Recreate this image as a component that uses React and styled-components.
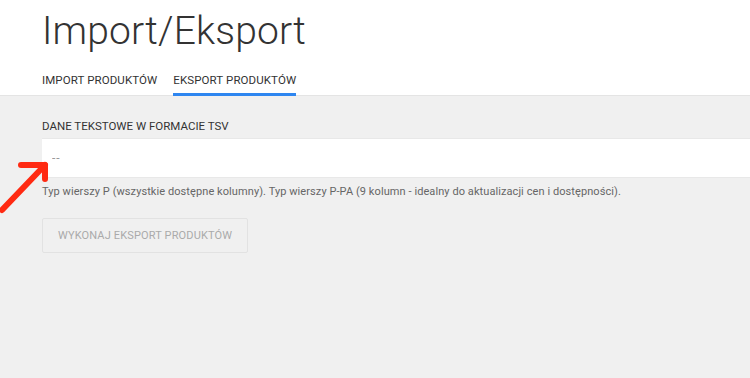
import React, { useState } from "react";
import styled, { createGlobalStyle } from "styled-components";

const GlobalStyle = createGlobalStyle`
  html, body {
    margin: 0;
    padding: 0;
    background: #f0f0f0;
    font-family: Roboto, "Liberation Sans", sans-serif;
  }
  * { box-sizing: border-box; }
`;

const Page = styled.div`
  position: relative;
  width: 750px;
  height: 378px;
  overflow: hidden;
  background: #f0f0f0;
`;

const Header = styled.div`
  background: #fff;
  padding: 0 0 0 42px;
  border-bottom: 1px solid #e4e4e4;
`;

const Title = styled.h1`
  margin: 0;
  padding-top: 5px;
  font-size: 39px;
  line-height: 52px;
  font-weight: 300;
  color: #333;
  letter-spacing: 0.15px;
`;

const Tabs = styled.div`
  display: flex;
  gap: 16px;
  margin-top: 16px;
`;

const Tab = styled.div`
  font-size: 11.5px;
  color: #333;
  padding-bottom: 6px;
  border-bottom: 3px solid ${(p) => (p.active ? "#2e86f0" : "transparent")};
  margin-bottom: -1px;
  cursor: pointer;
  letter-spacing: 0.1px;
`;

const Content = styled.div`
  padding: 23px 0 0 42px;
  display: flex;
  flex-direction: column;
  align-items: flex-start;
`;

const Label = styled.label`
  font-size: 11.5px;
  color: #333;
  letter-spacing: 0px;
  margin-bottom: 5px;
`;

const TextArea = styled.input`
  width: 100%;
  height: 40px;
  border: none;
  border-top: 1px solid #e8e8e8;
  border-bottom: 1px solid #e8e8e8;
  background: #fff;
  padding: 0 10px;
  font-family: inherit;
  font-size: 12px;
  color: #333;
  outline: none;
  &::placeholder { color: #999; letter-spacing: 1px; }
`;

const Help = styled.p`
  margin: 7px 0 0;
  font-size: 11px;
  color: #666;
  letter-spacing: 0.08px;
`;

const Button = styled.button`
  margin-top: 20px;
  height: 35px;
  padding: 0 15px;
  background: #f0f0f0;
  border: 1px solid #e2e2e2;
  border-radius: 2px;
  font-family: inherit;
  font-size: 11px;
  color: #aaa;
  letter-spacing: 0.15px;
  cursor: default;
`;

const Arrow = styled.svg`
  position: absolute;
  left: 0;
  top: 155px;
`;

export default function App() {
  const [tab, setTab] = useState("export");
  return (
    <Page>
      <GlobalStyle />
      <Header>
        <Title>Import/Eksport</Title>
        <Tabs>
          <Tab active={tab === "import"} onClick={() => setTab("import")}>IMPORT PRODUKTÓW</Tab>
          <Tab active={tab === "export"} onClick={() => setTab("export")}>EKSPORT PRODUKTÓW</Tab>
        </Tabs>
      </Header>
      <Content>
        <Label>DANE TEKSTOWE W FORMACIE TSV</Label>
        <TextArea placeholder="--" />
        <Help>Typ wierszy P (wszystkie dostępne kolumny). Typ wierszy P-PA (9 kolumn - idealny do aktualizacji cen i dostępności).</Help>
        <Button disabled>WYKONAJ EKSPORT PRODUKTÓW</Button>
      </Content>
      <Arrow width="60" height="65" viewBox="0 0 60 65">
        <g stroke="#ff2a12" strokeWidth="6" strokeLinecap="round" strokeLinejoin="round" fill="none">
          <path d="M2 55 L45 10" />
          <path d="M21 10 L45 10 L45 24" />
        </g>
      </Arrow>
    </Page>
  );
}
